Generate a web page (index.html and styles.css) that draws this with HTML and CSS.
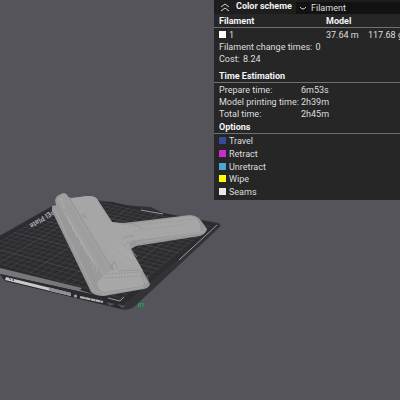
FILE: index.html
```
<!DOCTYPE html>
<html lang="en">
<head>
<meta charset="utf-8">
<title>Slice preview</title>
<link rel="stylesheet" href="styles.css">
</head>
<body>
<main class="viewer">
  <svg class="scene" viewBox="0 0 400 400" role="img" aria-label="Sliced model on the build plate">
    <!-- build plate -->
    <path fill="#333236" d="M-40 258 L52 206 L76 198 L112 202 L122 205 L151 207 L163 213 L219 223 L221 226 L134 307 Q128 311 121 309 L5 281 L0 274 Z"/>
    <path fill="#2c2b2f" d="M-37 258 L60 203 L112 202 L219 225 L124 304 Z"/>
    <g id="grid" class="grid"></g>
    <path fill="#77767a" d="M0 268 L82 288 L80 290 L96 295 L0 274 Z"/>
    <path fill="#2b2a2e" d="M0 274 L95 295 L124 303 L122 309 L5 281 Z"/>
    <path fill="#c9c9cb" d="M6 277 L71 293 L71 296 L5 280 Z"/>
    <path fill="#8f8f92" d="M48 287 L71 293 L71 296 L50 291 Z"/>
    <path fill="#2b2a2e" d="M9 279 L10 278 L11 280 Z M12 280 L14 279 L14 281 Z"/>
    <path fill="none" stroke="#b4b4b6" stroke-width="2.2" stroke-dasharray="5 .4" d="M80 297 L103 302"/>
    <circle cx="75.500" cy="296" r="1.600" fill="#a5a5a8"/>
    <path fill="#535257" d="M106 302 L115 304 L110 306 Z M117 304 L126 306 L122 308 Z"/>
    <g fill="none" stroke="#a6a6a9" stroke-width=".9">
      <path d="M217 225 L179 260"/>
      <path d="M141 210 L163 214"/>
      <path d="M108 298 L120 301 L124 297"/>
    </g>
    <text class="plate-name" transform="translate(53 209) rotate(147)">PEI Plate</text>
    <!-- printed part -->
    <path fill="#999" d="M55 200 L57 196 L63 193 Q67 193 68 197 L72 198 L88 196 Q95 196 97 199 L112 222 L124 223 L190 215 Q199 216 202 222 L207 229 Q206 234 200 236 L136 246 L131 249 L150 284 Q149 288 144 289 L104 296 Q95 296 91 292 L52 211 L52 206 L56 205 Z"/>
    <path fill="#a6a6a6" d="M72 198 L88 196 Q95 196 97 199 L112 222 L124 225 L190 216 Q200 217 201 227 L200 232 L130 241 L129 248 L143 271 L112 273 L70 202 Z"/>
    <path fill="#a0a0a0" d="M56 201 Q59 193 66 194 L70 199 L113 271 L107 284 L62 210 Z"/>
    <path fill="#a7a7a7" d="M97 282 L109 271 L141 270 L147 283 L142 286 L104 292 Q98 291 97 282 Z"/>
    <g fill="none" stroke="#858585" stroke-width=".5">
      <path d="M70 199 L113 270"/>
      <path d="M81 215 L86 218 L84 213"/>
      <path stroke-dasharray="1 1" d="M98 201 L111 222"/>
      <path stroke-dasharray="1 1.500" d="M128 226 L195 219 M134 231 L188 224 M130 244 L200 234 M66 204 L105 272 M70 206 L108 272"/>
      <path d="M198 219 L203 231 M141 271 L145 285 M147 275 L149 284"/>
      <path d="M122 240 Q126 235 134 236 M124 246 L129 242 M131 223 L143 229"/>
      <path d="M110 269 L114 261 L118 269 M113 270 L112 264 M119 271 L139 270"/>
      <path stroke-dasharray="2 1" d="M106 274 L140 272 M103 278 L142 276"/>
    </g>
    <g fill="none" stroke="#b4b4b4" stroke-width=".5">
      <path d="M60 198 Q65 205 64 211 M64 213 Q70 218 71 225 M68 219 Q76 229 76 237 M72 227 Q82 239 81 246 M76 235 Q89 247 86 255 M81 244 Q94 256 91 264 M87 254 Q100 266 96 273"/>
      <path d="M66 217 Q73 224 73 231 M74 231 Q85 243 84 251 M84 249 Q97 262 93 269"/>
      <path d="M54 208 L94 291 L104 294 L144 287"/>
      <path d="M136 243 L200 233 L205 229 M114 245 L132 259 M111 250 L132 265 M117 242 L136 262 M122 238 L137 257"/>
    </g>
    <text class="plate-number" x="138" y="307">01</text>
  </svg>

  <section class="panel" aria-label="Slicing result">
    <header class="bar">
      <button class="collapse" type="button" aria-label="Collapse panel">
        <svg viewBox="0 0 10 10"><path d="M1 5 L5 2 L9 5 M1 9 L5 6 L9 9"/></svg>
      </button>
      <label class="bar-title" for="scheme">Color scheme</label>
      <div class="picker">
        <svg viewBox="0 0 8 4"><path d="M1 1 Q4 5 7 1"/></svg>
        <select id="scheme"><option>Filament</option></select>
      </div>
    </header>

    <table class="usage">
      <colgroup><col class="name"><col class="length"><col></colgroup>
      <thead><tr><th>Filament</th><th colspan="2">Model</th></tr></thead>
      <tbody><tr><td><i class="swatch white"></i>1</td><td>37.64 m</td><td>117.68 g</td></tr></tbody>
    </table>
    <p class="line">Filament change times: <span>0</span></p>
    <p class="line">Cost: <span>8.24</span></p>

    <h2>Time Estimation</h2>
    <dl class="times">
      <dt>Prepare time:</dt><dd>6m53s</dd>
      <dt>Model printing time:</dt><dd>2h39m</dd>
      <dt>Total time:</dt><dd>2h45m</dd>
    </dl>

    <h2>Options</h2>
    <ul class="options">
      <li><i class="swatch travel"></i>Travel</li>
      <li><i class="swatch retract"></i>Retract</li>
      <li><i class="swatch unretract"></i>Unretract</li>
      <li><i class="swatch wipe"></i>Wipe</li>
      <li><i class="swatch seams"></i>Seams</li>
    </ul>
  </section>
</main>
<script src="grid.js"></script>
</body>
</html>
```
FILE: styles.css
```
* { box-sizing: border-box; }
body {
  margin: 0;
  background: #55545a;
  color: #dedede;
  font: 9px/12px Roboto, sans-serif;
}
.viewer {
  position: relative;
  min-height: 100vh;
  overflow: hidden;
}
.scene { display: block; width: 100%; }
.grid { fill: none; stroke: #4a494e; stroke-width: .5; }
.grid .major { stroke: #5c5b60; }
.plate-number { fill: #0fae55; font: italic 700 6px Roboto, sans-serif; }
.plate-name { fill: #a9a9ac; font: 700 7px Roboto, sans-serif; }

.panel {
  position: absolute;
  top: 0;
  right: 0;
  width: 186px;
  padding-bottom: 1px;
  background: #262627;
  white-space: nowrap;
  overflow: hidden;
}
.bar { display: flex; height: 14px; background: #1d1d1e; }
.collapse {
  width: 22px;
  padding: 0 0 0 6px;
  border: 0;
  background: none;
}
.collapse svg { display: block; width: 10px; height: 10px; }
.bar svg { fill: none; stroke: #d8d8d8; stroke-width: 1; }
.bar-title { flex: none; width: 60px; color: #f2f2f2; font-weight: 700; line-height: 13px; }
.picker {
  display: flex;
  flex: 1;
  align-items: center;
  gap: 4px;
  margin-top: 2px;
  padding-left: 3px;
  background: #121213;
}
.picker svg { flex: none; width: 8px; height: 4px; }
select {
  flex: 1;
  min-width: 0;
  height: 12px;
  padding: 0;
  border: 0;
  appearance: none;
  background: none;
  color: inherit;
  font: inherit;
}

.usage { width: 100%; border-collapse: collapse; table-layout: fixed; }
.usage th, .usage td { padding: 1px 0 0; text-align: left; }
.usage th:first-child, .usage td:first-child { padding-left: 5px; }
.name { width: 112px; }
.length { width: 42px; }
thead { border-bottom: 1px solid #707071; }
th, h2 { color: #f4f4f4; font-weight: 700; }

.line { margin: 0; padding-left: 5px; }
.line span { margin-left: 1px; }
h2 {
  margin: 0;
  padding: 1px 0 0 5px;
  border-bottom: 1px solid #707071;
  font-size: 9px;
  line-height: 12px;
}
.line + h2 { margin-top: 4px; }
.times { display: grid; grid-template-columns: 82px 1fr; margin: 0; padding: 1px 0 0 5px; }
.times dd { margin: 0; }
.options {
  display: flex;
  flex-direction: column;
  height: 65px;
  margin: 0;
  padding: 1px 0 0 5px;
  list-style: none;
}
.options li { flex: 1; }
.swatch { display: inline-block; width: 7px; height: 7px; margin-right: 3px; }
.white { background: #fff; }
.travel { background: #38489b; }
.retract { background: #cd2bd0; }
.unretract { background: #49a8cf; }
.wipe { background: #ff0; }
.seams { background: #e8e8e8; }
```
FILE: grid.js
```
// Projects the unit square of the plate onto its four screen corners.
const corners = [[75, 194], [219, 225], [124, 304], [-37, 258]];
const [[x0, y0], [x1, y1], [x2, y2], [x3, y3]] = corners;
const dx1 = x1 - x2, dx2 = x3 - x2, dx3 = x0 - x1 + x2 - x3;
const dy1 = y1 - y2, dy2 = y3 - y2, dy3 = y0 - y1 + y2 - y3;
const det = dx1 * dy2 - dx2 * dy1;
const g = (dx3 * dy2 - dx2 * dy3) / det;
const h = (dx1 * dy3 - dx3 * dy1) / det;
const project = (u, v) => {
  const w = g * u + h * v + 1;
  return [
    ((x1 - x0 + g * x1) * u + (x3 - x0 + h * x3) * v + x0) / w,
    ((y1 - y0 + g * y1) * u + (y3 - y0 + h * y3) * v + y0) / w
  ];
};
const grid = document.getElementById("grid");
const count = 24;
const add = (a, b, major) => {
  const path = document.createElementNS("http://www.w3.org/2000/svg", "path");
  path.setAttribute("d", `M${a} L${b}`);
  if (major) path.setAttribute("class", "major");
  grid.append(path);
};
for (let i = 1; i < count; i++) {
  const t = i / count;
  add(project(t, 0.03), project(t, 0.97), i % 5 === 0);
  add(project(0.03, t), project(0.97, t), i % 5 === 0);
}
```
